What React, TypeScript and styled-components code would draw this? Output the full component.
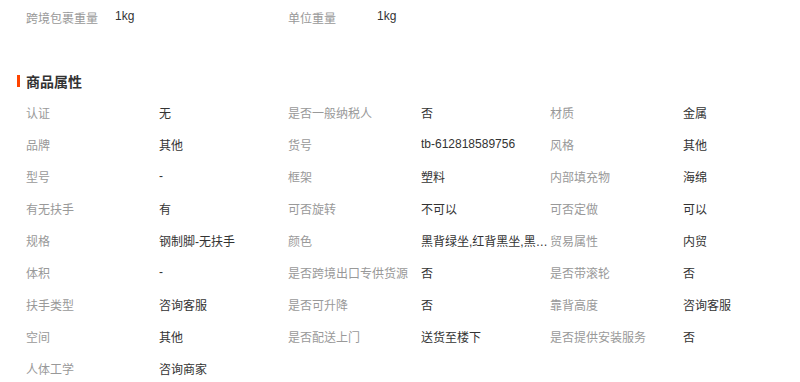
import styled, { createGlobalStyle } from "styled-components"

const Global = createGlobalStyle`
  body {
    margin: 0;
    background: #fff;
    font-family: "Liberation Sans", "Noto Sans CJK SC", sans-serif;
    font-size: 12px;
  }
`

const Page = styled.div`
  width: 800px;
  height: 382px;
  overflow: hidden;
`

const TopRow = styled.div`
  display: flex;
  padding-left: 26px;
  height: 34px;
  align-items: center;
`

const TopItem = styled.div`
  display: flex;
  width: 262px;
`

const TopLabel = styled.span`
  width: 89px;
  color: #999;
`

const Value = styled.span<{ $w?: number }>`
  color: #333;
  width: ${p => p.$w ?? 118}px;
  white-space: nowrap;
  overflow: hidden;
  text-overflow: ellipsis;
`

const Title = styled.h3`
  margin: 37px 0 0 17px;
  height: 20px;
  display: flex;
  align-items: center;
  gap: 6px;
  font-size: 14px;
  font-weight: bold;
  color: #333;
  &::before {
    content: "";
    width: 3px;
    height: 12px;
    background: #ff4400;
  }
`

const Grid = styled.div`
  margin-top: 5px;
  padding-left: 26px;
  display: grid;
  grid-template-columns: repeat(3, 262px);
  grid-auto-rows: 32px;
`

const Cell = styled.div`
  display: flex;
  align-items: center;
`

const Label = styled.span`
  width: 133px;
  color: #999;
  white-space: nowrap;
`

const attrs: [string, string][] = [
  ["认证", "无"], ["是否一般纳税人", "否"], ["材质", "金属"],
  ["品牌", "其他"], ["货号", "tb-612818589756"], ["风格", "其他"],
  ["型号", "-"], ["框架", "塑料"], ["内部填充物", "海绵"],
  ["有无扶手", "有"], ["可否旋转", "不可以"], ["可否定做", "可以"],
  ["规格", "钢制脚-无扶手"], ["颜色", "黑背绿坐,红背黑坐,黑背红坐,白背黑坐"], ["贸易属性", "内贸"],
  ["体积", "-"], ["是否跨境出口专供货源", "否"], ["是否带滚轮", "否"],
  ["扶手类型", "咨询客服"], ["是否可升降", "否"], ["靠背高度", "咨询客服"],
  ["空间", "其他"], ["是否配送上门", "送货至楼下"], ["是否提供安装服务", "否"],
  ["人体工学", "咨询商家"],
]

const App = () => {
  return (
    <Page>
      <Global />
      <TopRow>
        <TopItem>
          <TopLabel>跨境包裹重量</TopLabel>
          <Value>1kg</Value>
        </TopItem>
        <TopItem>
          <TopLabel>单位重量</TopLabel>
          <Value>1kg</Value>
        </TopItem>
      </TopRow>
      <Title>商品属性</Title>
      <Grid>
        {attrs.map(([k, v]) => (
          <Cell key={k}>
            <Label>{k}</Label>
            <Value $w={127}>{v}</Value>
          </Cell>
        ))}
      </Grid>
    </Page>
  )
}

export default App
